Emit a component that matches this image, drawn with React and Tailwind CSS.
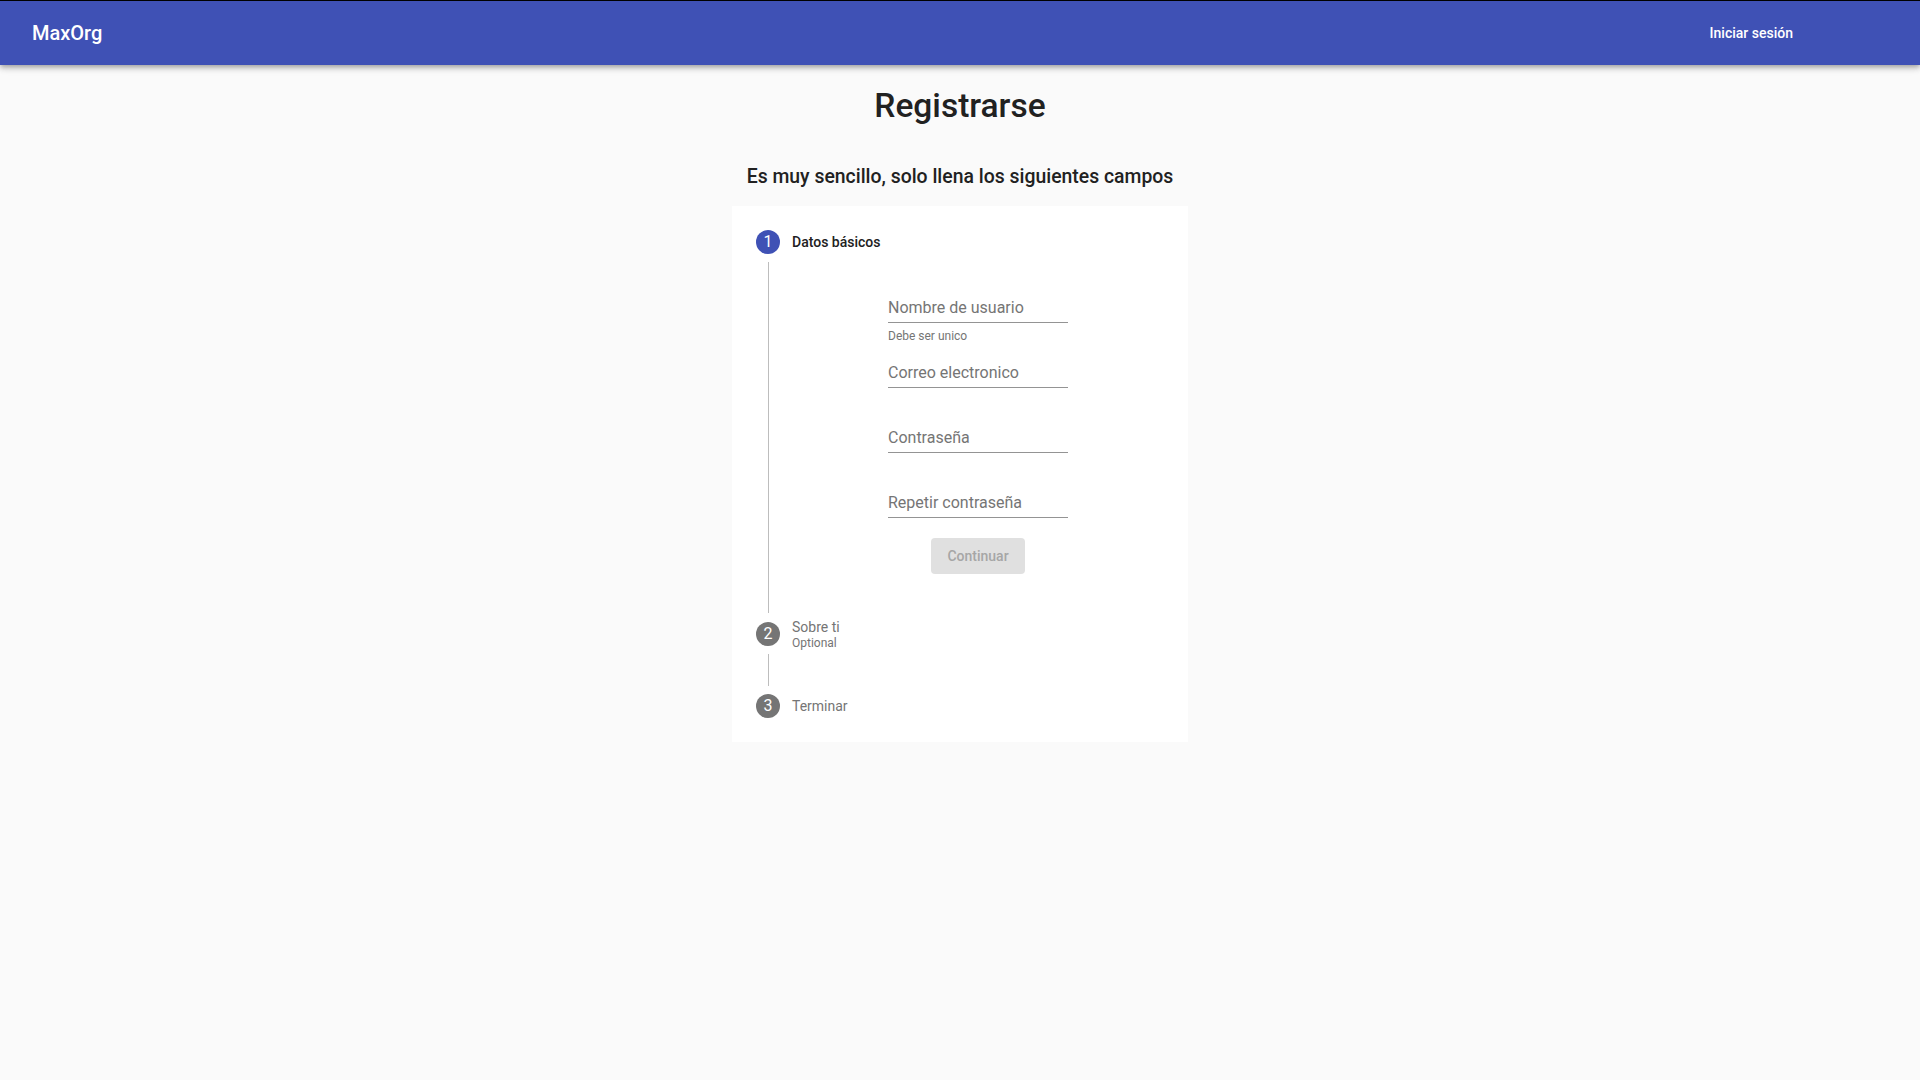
export default function App() {
  const fields = [
    { placeholder: 'Nombre de usuario', helper: 'Debe ser unico' },
    { placeholder: 'Correo electronico' },
    { placeholder: 'Contraseña', type: 'password' },
    { placeholder: 'Repetir contraseña', type: 'password' },
  ];

  return (
    <div className="min-h-screen bg-[#fafafa] font-['Roboto','Liberation_Sans',sans-serif]">
      {/* App bar */}
      <header className="h-[65px] border-t border-black bg-[#3f51b5] text-white flex items-center justify-between pl-[32px] pr-[127px] shadow-[0px_2px_4px_-1px_rgba(0,0,0,0.2),0px_4px_5px_0px_rgba(0,0,0,0.14),0px_1px_10px_0px_rgba(0,0,0,0.12)]">
        <span className="text-[20px] font-medium leading-[32px]">MaxOrg</span>
        <button className="text-[14px] font-medium leading-[24px]">Iniciar sesión</button>
      </header>

      <main className="flex flex-col items-center">
        <h1 className="mt-[20px] text-[33.5px] leading-[42px] font-medium text-[#212121]">Registrarse</h1>
        <h2 className="mt-[34px] text-[19.4px] leading-[32px] font-medium text-[#212121]">
          Es muy sencillo, solo llena los siguientes campos
        </h2>

        {/* Stepper */}
        <div className="mt-[13px] w-[456px] bg-white p-[24px]">
          {/* Step 1 */}
          <div className="flex items-center gap-[12px]">
            <span className="w-[24px] h-[24px] rounded-full bg-[#3f51b5] text-white text-[16px] flex items-center justify-center">1</span>
            <span className="text-[14px] font-medium text-[#212121]">Datos básicos</span>
          </div>
          <div className="mt-[8px] ml-[12px] h-[351px] border-l border-[#bdbdbd] pl-[119px] pt-[29px]">
            <div className="w-[180px] flex flex-col items-center">
              {fields.map((f, i) => (
                <div key={i} className="w-full">
                  <input
                    type={f.type || 'text'}
                    placeholder={f.placeholder}
                    className="w-full h-[32px] border-b border-[#949494] bg-transparent outline-none pt-[7px] pb-[5px] text-[16px] leading-[19px] text-[#212121] placeholder:text-[#757575]"
                  />
                  {i < fields.length - 1 && (
                    <div className="h-[33px]">
                      {f.helper && <p className="pt-[6px] text-[12px] leading-[14px] text-[#757575]">{f.helper}</p>}
                    </div>
                  )}
                </div>
              ))}
              <button
                disabled
                className="mt-[20px] h-[36px] px-[16px] rounded-[4px] bg-[#e0e0e0] text-[14px] font-medium text-[#a6a6a6]"
              >
                Continuar
              </button>
            </div>
          </div>

          {/* Step 2 */}
          <div className="mt-[5px] flex items-center gap-[12px]">
            <span className="w-[24px] h-[24px] rounded-full bg-[#757575] text-white text-[16px] flex items-center justify-center">2</span>
            <div className="flex flex-col">
              <span className="text-[14px] leading-[18px] text-[#757575]">Sobre ti</span>
              <span className="text-[12px] leading-[14px] text-[#757575]">Optional</span>
            </div>
          </div>
          <div className="mt-[4px] ml-[12px] h-[32px] border-l border-[#bdbdbd]"></div>

          {/* Step 3 */}
          <div className="mt-[8px] flex items-center gap-[12px]">
            <span className="w-[24px] h-[24px] rounded-full bg-[#757575] text-white text-[16px] flex items-center justify-center">3</span>
            <span className="text-[14px] leading-[24px] text-[#757575]">Terminar</span>
          </div>
        </div>
      </main>
    </div>
  );
}
